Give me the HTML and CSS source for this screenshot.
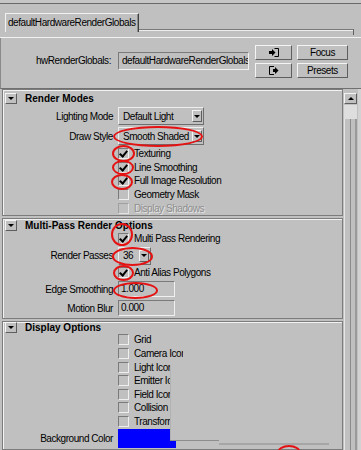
FILE: index.html
```html
<!DOCTYPE html>
<html lang="en">
<head>
  <meta charset="UTF-8" />
  <title>defaultHardwareRenderGlobals</title>
  <link rel="stylesheet" href="styles.css">
</head>
<body>

  <div class="win">
    <!-- tab strip -->
    <div class="tabbar">
      <div class="tab">defaultHardwareRenderGlobals</div>
      <div class="tab-rest"></div>
    </div>

    <!-- node name row -->
    <div class="node">
      <span class="node-label">hwRenderGlobals:</span>
      <div class="field node-field">defaultHardwareRenderGlobals</div>
      <div class="btn-col icons">
        <button class="btn">
          <svg width="12" height="11" viewBox="0 0 12 11"><path d="M6.5 1.5h4v8h-4" fill="none" stroke="#000"/><polygon points="1,4 4,4 4,2 7.5,5.5 4,9 4,7 1,7" fill="#000"/></svg>
        </button>
        <button class="btn">
          <svg width="12" height="11" viewBox="0 0 12 11"><path d="M6 1.5H1.5v8H6" fill="none" stroke="#000"/><polygon points="5,4 7,4 7,2 10.5,5.5 7,9 7,7 5,7" fill="#000"/></svg>
        </button>
      </div>
      <div class="btn-col texts">
        <button class="btn">Focus</button>
        <button class="btn">Presets</button>
      </div>
    </div>

    <!-- attribute frames + scrollbar -->
    <div class="attrs">
      <div class="frames">

        <section class="frame frame-render">
          <div class="frame-head"><span class="arrow"></span>Render Modes</div>
          <div class="row drop-row">
            <span class="lbl">Lighting Mode</span>
            <div class="drop wide"><span>Default Light</span><i class="drop-btn"></i></div>
          </div>
          <div class="row drop-row">
            <span class="lbl">Draw Style</span>
            <div class="drop wide"><span>Smooth Shaded</span><i class="drop-btn"></i></div>
          </div>
          <div class="checks">
            <div class="row chk"><span class="lbl"></span><span class="box on"></span>Texturing</div>
            <div class="row chk"><span class="lbl"></span><span class="box on"></span>Line Smoothing</div>
            <div class="row chk"><span class="lbl"></span><span class="box on"></span>Full Image Resolution</div>
            <div class="row chk"><span class="lbl"></span><span class="box"></span>Geometry Mask</div>
            <div class="row chk off"><span class="lbl"></span><span class="box"></span>Display Shadows</div>
          </div>
        </section>

        <section class="frame frame-multi">
          <div class="frame-head"><span class="arrow"></span>Multi-Pass Render Options</div>
          <div class="row chk tall"><span class="lbl"></span><span class="box on"></span>Multi Pass Rendering</div>
          <div class="row drop-row">
            <span class="lbl">Render Passes</span>
            <div class="drop small"><span>36</span><i class="drop-btn"></i></div>
          </div>
          <div class="row chk tall"><span class="lbl"></span><span class="box on"></span>Anti Alias Polygons</div>
          <div class="row field-row">
            <span class="lbl">Edge Smoothing</span>
            <div class="field num">1.000</div>
          </div>
          <div class="row field-row">
            <span class="lbl">Motion Blur</span>
            <div class="field num">0.000</div>
          </div>
        </section>

        <section class="frame frame-display">
          <div class="frame-head"><span class="arrow"></span>Display Options</div>
          <div class="row chk wide-step"><span class="lbl"></span><span class="box"></span>Grid</div>
          <div class="row chk wide-step"><span class="lbl"></span><span class="box"></span>Camera Icons</div>
          <div class="row chk wide-step"><span class="lbl"></span><span class="box"></span>Light Icons</div>
          <div class="row chk wide-step"><span class="lbl"></span><span class="box"></span>Emitter Icons</div>
          <div class="row chk wide-step"><span class="lbl"></span><span class="box"></span>Field Icons</div>
          <div class="row chk wide-step"><span class="lbl"></span><span class="box"></span>Collision Icons</div>
          <div class="row chk wide-step"><span class="lbl"></span><span class="box"></span>Transform Icons</div>
          <div class="row swatch-row">
            <span class="lbl">Background Color</span>
            <div class="swatch"></div>
          </div>
        </section>

      </div>

      <div class="scroll">
        <div class="scroll-up"></div>
        <div class="scroll-thumb"></div>
        <div class="scroll-track"></div>
      </div>
    </div>
  </div>

  <!-- stray window lying over the display options -->
  <div class="overlay-top"></div>
  <div class="overlay"></div>

  <!-- red annotation circles -->
  <div class="mark m1"></div>
  <div class="mark m2"></div>
  <div class="mark m3"></div>
  <div class="mark m4"></div>
  <div class="mark m5"></div>
  <div class="mark m6"></div>
  <div class="mark m7"></div>
  <div class="mark m8"></div>
  <div class="mark m9"></div>

</body>
</html>
```

FILE: styles.css
```css
/* General styling */
* {
  box-sizing: border-box;
}

body {
  margin: 0;
  padding-top: 3px;
  width: 361px;
  height: 450px;
  overflow: hidden;
  position: relative;
  background: #c6c6c6;
  font-family: 'Liberation Sans', Arial, sans-serif;
  font-size: 10px;
  letter-spacing: -0.45px;
  color: #000;
}

.win {
  border-top: 1px solid #6a6a6a;
  background: #c0c0c0;
  height: 447px;
}

/* Tab strip */
.tabbar {
  height: 34px;
  display: flex;
  align-items: flex-start;
  padding-left: 5px;
  border-bottom: 1px solid #f2f2f2;
}

.tab {
  margin-top: 9px;
  height: 19px;
  line-height: 17px;
  padding: 0 3px 0 2px;
  border-top: 1px solid #f2f2f2;
  border-left: 1px solid #f2f2f2;
  border-right: 1px solid #404040;
  box-shadow: inset -1px 0 #8a8a8a;
  white-space: nowrap;
}

.tab-rest {
  margin-top: 25px;
  width: 215px;
  height: 6px;
  border-top: 1px solid #7a7a7a;
  border-right: 1px solid #606060;
  box-shadow: inset 0 1px #ececec;
}

/* Node row */
.node {
  height: 51px;
  display: flex;
  align-items: flex-start;
  padding-top: 7px;
  border-left: 1px solid #8a8a8a;
  border-bottom: 1px solid #707070;
}

.node-label {
  width: 110px;
  margin-top: 7px;
  line-height: 18px;
  text-align: right;
}

.field {
  border: 1px solid;
  border-color: #7a7a7a #f0f0f0 #f0f0f0 #7a7a7a;
  background: #c0c0c0;
  white-space: nowrap;
  overflow: hidden;
}

.node-field {
  margin-left: 7px;
  margin-top: 7px;
  width: 131px;
  height: 18px;
  line-height: 16px;
  padding-left: 3px;
}

.btn-col {
  display: flex;
  flex-direction: column;
  gap: 3px;
}

.btn-col.icons {
  margin-left: 6px;
  width: 37px;
}

.btn-col.texts {
  margin-left: 5px;
  width: 51px;
}

.btn {
  height: 15px;
  padding: 0;
  border: 1px solid;
  border-color: #f4f4f4 #5e5e5e #5e5e5e #f4f4f4;
  background: #c0c0c0;
  font: inherit;
  letter-spacing: inherit;
  color: #000;
  display: flex;
  align-items: center;
  justify-content: center;
}

.btn svg {
  display: block;
}

/* Attribute area */
.attrs {
  display: flex;
  padding-left: 2px;
  height: 361px;
}

.frames {
  width: 341px;
}

.frame {
  border: 1px solid #7c7c7c;
  box-shadow: inset 1px 1px 0 #f2f2f2;
  margin-bottom: 2px;
}

.frame-head {
  display: flex;
  align-items: center;
  padding-left: 2px;
  font-weight: bold;
  letter-spacing: 0;
  white-space: nowrap;
}

.frame-render .frame-head { height: 16px; }
.frame-multi .frame-head { height: 13px; }
.frame-display .frame-head { height: 11px; }

.arrow {
  width: 12px;
  height: 11px;
  margin-right: 8px;
  border: 1px solid;
  border-color: #f4f4f4 #5e5e5e #5e5e5e #f4f4f4;
  display: flex;
  align-items: center;
  justify-content: center;
}

.arrow::after {
  content: "";
  border-left: 3px solid transparent;
  border-right: 3px solid transparent;
  border-top: 3px solid #000;
}

.row {
  display: flex;
  align-items: center;
  white-space: nowrap;
}

.lbl {
  width: 110px;
  text-align: right;
  margin-right: 5px;
}

.drop-row { height: 20px; }
.field-row { height: 19px; }
.swatch-row { height: 21px; }

.checks {
  padding-top: 1px;
}

.chk { height: 13.6px; }
.chk.tall { height: 14px; }
.chk.wide-step { height: 13.65px; }

.box {
  width: 11px;
  height: 11px;
  margin-right: 5px;
  border: 1px solid;
  border-color: #7a7a7a #efefef #efefef #7a7a7a;
  position: relative;
}

.box.on::after {
  content: "";
  position: absolute;
  left: 2px;
  top: 0px;
  width: 3px;
  height: 6px;
  border-right: 2px solid #000;
  border-bottom: 2px solid #000;
  transform: rotate(40deg);
}

.chk.off {
  color: #8e8e8e;
  text-shadow: 1px 1px 0 #e6e6e6;
}

.chk.off .box {
  border-color: #a0a0a0 #e2e2e2 #e2e2e2 #a0a0a0;
}

/* Option menus */
.drop {
  height: 18px;
  display: flex;
  align-items: center;
  justify-content: space-between;
  padding-left: 4px;
  padding-right: 1px;
  border: 1px solid;
  border-color: #eeeeee #6e6e6e #6e6e6e #eeeeee;
}

.drop.wide { width: 86px; }
.drop.small { width: 33px; }

.drop-btn {
  width: 10px;
  height: 12px;
  border: 1px solid;
  border-color: #f4f4f4 #5e5e5e #5e5e5e #f4f4f4;
  display: flex;
  align-items: center;
  justify-content: center;
}

.drop-btn::after {
  content: "";
  border-left: 3px solid transparent;
  border-right: 3px solid transparent;
  border-top: 3px solid #000;
}

.num {
  width: 57px;
  height: 16px;
  line-height: 14px;
  padding-left: 2px;
}

.swatch {
  width: 58px;
  height: 19px;
  background: #0000ff;
}

/* Scrollbar */
.scroll {
  width: 18px;
  padding: 4px 0 0 1px;
  display: flex;
  flex-direction: column;
  box-shadow: inset -3px 0 #d2d2d2;
}

.scroll-up {
  width: 13px;
  height: 11px;
  border: 1px solid;
  border-color: #f4f4f4 #5e5e5e #5e5e5e #f4f4f4;
  display: flex;
  align-items: center;
  justify-content: center;
}

.scroll-up::after {
  content: "";
  border-left: 3px solid transparent;
  border-right: 3px solid transparent;
  border-bottom: 3px solid #000;
}

.scroll-thumb {
  width: 13px;
  height: 14px;
  margin-top: 1px;
  background: #dedede;
}

.scroll-track {
  width: 13px;
  flex: 1;
  background: linear-gradient(to right, #e6e6e6 0 1px, #c0c0c0 1px 6px, #8c8c8c 6px 7px, #c0c0c0 7px 11px, #9a9a9a 11px);
}

/* Window lying on top */
.overlay-top {
  position: absolute;
  left: 183px;
  top: 348px;
  width: 158px;
  height: 17px;
  background: #c0c0c0;
}

.overlay {
  position: absolute;
  left: 170px;
  top: 365px;
  width: 171px;
  height: 76px;
  background: #c0c0c0;
  border-left: 1px solid #b2b2b2;
}

.overlay::before {
  content: "";
  position: absolute;
  left: -1px;
  top: 75px;
  width: 49px;
  height: 1px;
  background: #8e8e8e;
}

.overlay::after {
  content: "";
  position: absolute;
  left: 48px;
  top: 78px;
  width: 110px;
  height: 2px;
  background: #a6a6a6;
}

/* Red annotation circles */
.mark {
  position: absolute;
  border: 2px solid #e41212;
  border-radius: 50%;
}

.m1 { left: 113px; top: 126px; width: 90px; height: 21px; }
.m2 { left: 112px; top: 145px; width: 23px; height: 17px; }
.m3 { left: 112px; top: 160px; width: 22px; height: 15px; }
.m4 { left: 111px; top: 174px; width: 22px; height: 16px; }
.m5 { left: 111px; top: 223px; width: 22px; height: 23px; }
.m6 { left: 112px; top: 247px; width: 41px; height: 19px; }
.m7 { left: 113px; top: 265px; width: 21px; height: 16px; }
.m8 { left: 113px; top: 282px; width: 45px; height: 17px; }
.m9 { left: 277px; top: 445px; width: 24px; height: 16px; }
```
